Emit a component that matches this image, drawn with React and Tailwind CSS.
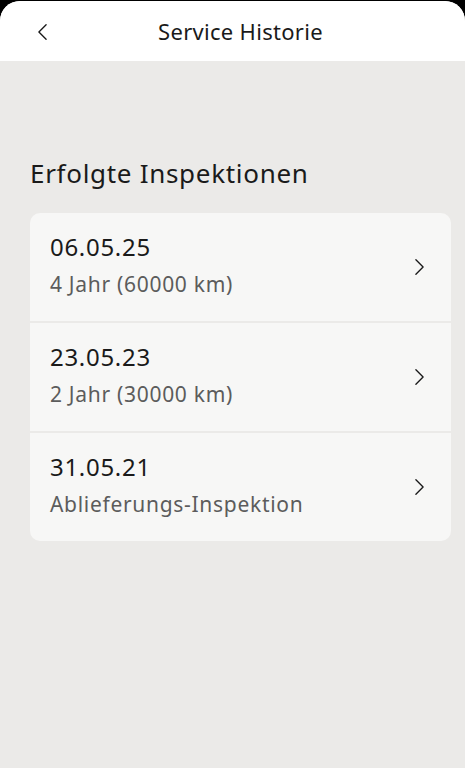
const ITEMS = [
  { date: "06.05.25", label: "4 Jahr (60000 km)" },
  { date: "23.05.23", label: "2 Jahr (30000 km)" },
  { date: "31.05.21", label: "Ablieferungs-Inspektion" },
];

function Chevron({ dir = "right", className = "" }) {
  const d = dir === "right" ? "M2 2l8 8-8 8" : "M10 2l-8 8 8 8";
  return (
    <svg viewBox="0 0 12 20" className={className} fill="none" stroke="currentColor" strokeWidth="1.5" strokeLinecap="round" strokeLinejoin="round">
      <path d={d} />
    </svg>
  );
}

export default function App() {
  return (
    <div className="h-[768px] w-[465px] bg-black font-['Noto_Sans',sans-serif] overflow-hidden">
      <div className="h-full flex flex-col bg-[#ebeae8] rounded-t-[20px] overflow-hidden mt-[1px]">
        {/* ── Header ── */}
        <header className="h-[60px] bg-white flex items-center relative shrink-0">
          <button className="absolute left-[37px] top-[22px] text-[#1a1a1a]">
            <Chevron dir="left" className="w-[11px] h-[18px]" />
          </button>
          <h1 className="w-full text-center text-[22px] tracking-[0.3px] text-[#1a1a1a] pl-[16px]">Service Historie</h1>
        </header>

        {/* ── Content ── */}
        <main className="pl-[30px] pr-[14px] pt-[94px]">
          <h2 className="text-[26px] tracking-[0.7px] text-[#1a1a1a] leading-[36px]">Erfolgte Inspektionen</h2>
          <div className="mt-[22px] rounded-[10px] overflow-hidden flex flex-col gap-[2px]">
            {ITEMS.map((item) => (
              <div key={item.date} className="h-[108px] bg-[#f7f7f6] flex items-center pl-[20px] pr-[26px]">
                <div className="flex-1 flex flex-col pb-[5px]">
                  <span className="text-[24px] tracking-[0.7px] text-[#1a1a1a] leading-[32px]">{item.date}</span>
                  <span className="text-[21px] tracking-[0.7px] text-[#5c5c5c] leading-[28px] mt-[7px]">{item.label}</span>
                </div>
                <Chevron className="w-[11px] h-[18px] text-[#1a1a1a]" />
              </div>
            ))}
          </div>
        </main>
      </div>
    </div>
  );
}
